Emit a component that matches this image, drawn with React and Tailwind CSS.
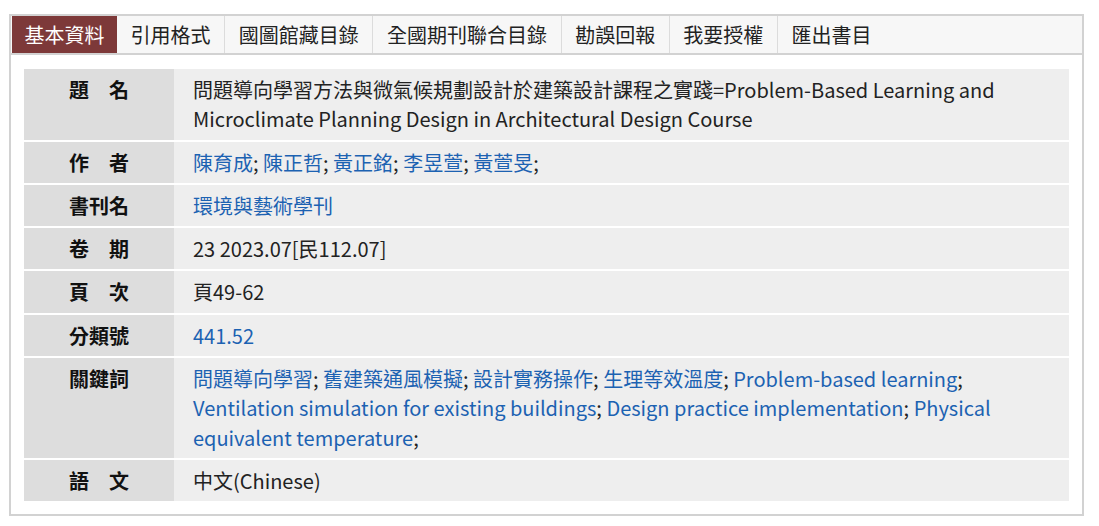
const TABS = ['基本資料', '引用格式', '國圖館藏目錄', '全國期刊聯合目錄', '勘誤回報', '我要授權', '匯出書目']

const Link = ({ children }) => <span className="text-[#1c62b2]">{children}</span>

const ROWS = [
  {
    label: '題　名',
    value: <>問題導向學習方法與微氣候規劃設計於建築設計課程之實踐=Problem-Based Learning and Microclimate Planning Design in Architectural Design Course</>,
  },
  {
    label: '作　者',
    value: (
      <>
        <Link>陳育成</Link>; <Link>陳正哲</Link>; <Link>黃正銘</Link>; <Link>李昱萱</Link>; <Link>黃萱旻</Link>;
      </>
    ),
  },
  { label: '書刊名', value: <Link>環境與藝術學刊</Link> },
  { label: '卷　期', value: <>23 2023.07[民112.07]</> },
  { label: '頁　次', value: <>頁49-62</> },
  { label: '分類號', value: <Link>441.52</Link> },
  {
    label: '關鍵詞',
    value: (
      <>
        <Link>問題導向學習</Link>; <Link>舊建築通風模擬</Link>; <Link>設計實務操作</Link>; <Link>生理等效溫度</Link>; <Link>Problem-based learning</Link>; <Link>Ventilation simulation for existing buildings</Link>; <Link>Design practice implementation</Link>; <Link>Physical equivalent temperature</Link>;
      </>
    ),
  },
  { label: '語　文', value: <>中文(Chinese)</> },
]

export default function App() {
  return (
    <div className="min-h-screen bg-white pt-[14px] pl-[9px] font-['Noto_Sans_CJK_TC','Noto_Sans',sans-serif]">
      <div className="w-[1075px] border-2 border-[#d2d2d2] bg-white">
        {/* tabs */}
        <div className="flex h-[39px] border-b-2 border-[#d2d2d2] bg-[#f7f7f7] pl-px">
          {TABS.map((t, i) => (
            <div
              key={t}
              className={
                i === 0
                  ? 'flex items-center bg-[#7d3939] px-[12.5px] text-[20px] leading-none text-white'
                  : i === TABS.length - 1
                    ? 'flex items-center px-[13.6px] text-[20px] leading-none text-[#222]'
                    : 'flex items-center border-r border-[#dcdcdc] px-[13.6px] text-[20px] leading-none text-[#222]'
              }
            >
              {t}
            </div>
          ))}
        </div>

        {/* detail table */}
        <div className="px-[13px] pt-[14px] pb-[13px]">
          <div className="flex flex-col gap-[2px]">
            {ROWS.map(({ label, value }) => (
              <div key={label} className="flex">
                <div className="w-[150px] shrink-0 bg-[#dddddd] py-[6px] text-center text-[20px] font-bold leading-[29.3px] text-[#111]">
                  {label}
                </div>
                <div className="flex-1 bg-[#eeeeee] py-[6px] pl-[19px] pr-[20px] text-[20px] leading-[29.3px] text-[#222]">
                  {value}
                </div>
              </div>
            ))}
          </div>
        </div>
      </div>
    </div>
  )
}
